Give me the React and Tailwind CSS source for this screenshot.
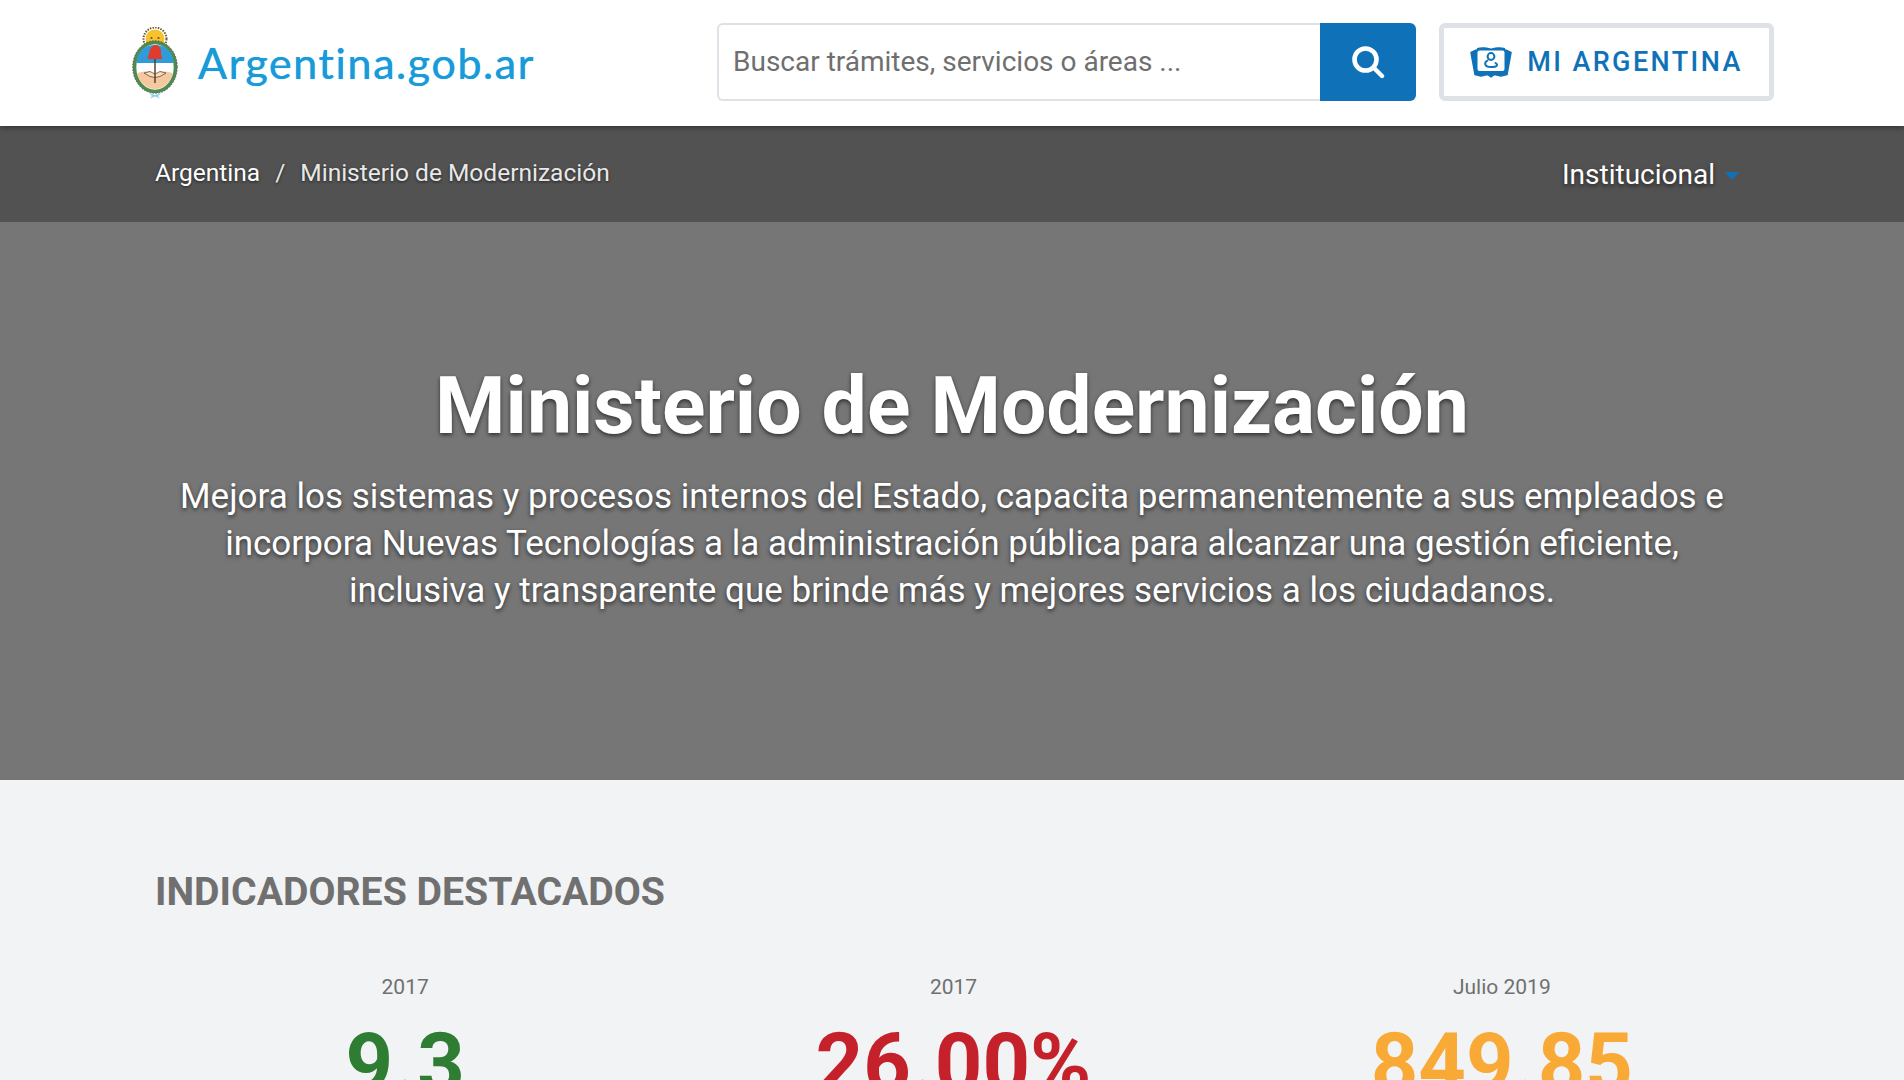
import React from "react";

const Crest = () => (
  <svg width="50" height="72" viewBox="0 0 50 72" className="mt-[2px] shrink-0">
    {/* sun */}
    <circle cx="25" cy="12" r="11.5" fill="none" stroke="#6b5a2a" strokeWidth="2" strokeDasharray="1.5 1.2" />
    <circle cx="25" cy="12" r="9.5" fill="#f6c22d" />
    <circle cx="21.5" cy="11" r="1.1" fill="#6b5a2a" />
    <circle cx="28.5" cy="11" r="1.1" fill="#6b5a2a" />
    {/* laurel */}
    <ellipse cx="25" cy="40" rx="20.5" ry="24.5" fill="#ffffff" stroke="#4f8a4f" strokeWidth="3.6" />
    <ellipse cx="25" cy="40" rx="22.3" ry="26.3" fill="none" stroke="#555" strokeWidth="0.9" strokeDasharray="1.5 1.5" />
    {/* shield */}
    <path d="M6.5 36C6.5 25 14.5 18 25 18s18.5 7 18.5 18z" fill="#2f9bd8" />
    <path d="M7.500 46c.8 8 8 16 17.500 16s16.700-8 17.500-16c-5-1.500-9-1.800-12-1.500l-5.500 3-5.500-3c-3-.3-7 0-12 1.500z" fill="#f5c9a0" />
    <path d="M14 46l6-1.500 5 2.500 5-2.500 6 1.500-6 3.500-5 1-5-1z" fill="#f8dcc0" stroke="#6b4a30" strokeWidth="0.8" />
    {/* pike and cap */}
    <rect x="24.300" y="31" width="1.400" height="25" fill="#4a3a2a" />
    <path d="M17.500 32c.3-2.500 1.500-4 1.800-6.500.4-3.500 3-7.500 6.200-7.500 3 0 6 3.500 5.500 7.500-.2 2.500 .8 4.500 1.500 6.500z" fill="#e23b2e" />
    {/* ribbon */}
    <path d="M19 66l6 2 6-2-3 3 2 2.500-5-2-5 2 2-2.500z" fill="#8fd0f0" />
  </svg>
);

const SearchIcon = () => (
  <svg width="34" height="34" viewBox="0 0 34 34" fill="none" stroke="#ffffff" className="shrink-0">
    <circle cx="14.500" cy="14.500" r="11" strokeWidth="4.600" />
    <path d="M23 23l8 8" strokeWidth="4.400" strokeLinecap="round" />
  </svg>
);

const MiArgIcon = () => (
  <svg width="42" height="31" viewBox="0 0 42 31" className="shrink-0">
    <path d="M1 5.500 6.500 3 9 5 33 5 35.500 3 41 5.500 37 27.500 31 29 24.500 27.500 21 30 17.500 27.500 11 29 5 27.500z" fill="#0f72b8" stroke="#0f72b8" strokeWidth="1.500" strokeLinejoin="round" />
    <path d="M7 1c5-1.200 9-.6 14 .5C26 .4 30-.2 35 1v3H7z" fill="#0f72b8" />
    <rect x="7.500" y="3.500" width="27" height="20.500" rx="2" fill="#ffffff" />
    <circle cx="21" cy="9.500" r="3.400" fill="none" stroke="#0f72b8" strokeWidth="2" />
    <path d="M17.500 13.500c-3.500 2-3.500 6.500 3.500 6.500s7-2.500 4.500-4" fill="none" stroke="#0f72b8" strokeWidth="2" strokeLinecap="round" />
  </svg>
);

const Indicator = ({ label, value, color }) => (
  <div className="flex flex-col items-center">
    <div className="text-[21px] leading-[30px] text-[#707070]">{label}</div>
    <div className={`mt-[12px] text-[83px] leading-[100px] font-bold ${color}`}>{value}</div>
  </div>
);

export default function App() {
  return (
    <div className="h-screen overflow-hidden bg-[#f1f3f5] font-['Roboto',sans-serif]">
      <header className="relative z-10 h-[126px] bg-white shadow-[0_2px_5px_rgba(0,0,0,0.35)]">
        <div className="flex h-full items-center pb-[2px] pl-[130px] pr-[130px]">
          <div className="flex items-center gap-[18px]">
            <Crest />
            <span className="font-['Lato',sans-serif] text-[43px] leading-none font-normal text-[#1a9ad9] tracking-[1.6px] [text-shadow:0_0_0.8px_#1a9ad9]">
              Argentina.gob.ar
            </span>
          </div>
          <div className="ml-auto flex h-[78px] items-stretch">
            <div className="flex w-[603px] items-center rounded-l-[6px] border-[2px] border-r-0 border-[#dee2e6] bg-white pl-[14px] text-[28px] text-[#6f6f6f]">
              Buscar trámites, servicios o áreas ...
            </div>
            <div className="flex w-[96px] items-center justify-center rounded-r-[6px] bg-[#0f72b8]">
              <SearchIcon />
            </div>
            <div className="ml-[23px] flex w-[335px] items-center justify-center gap-[15px] rounded-[6px] border-[5px] border-[#dee2e6] bg-white text-[27px] font-medium tracking-[2.4px] text-[#0f72b8]">
              <MiArgIcon />
              <span>MI ARGENTINA</span>
            </div>
          </div>
        </div>
      </header>

      <nav className="flex h-[96px] items-center justify-between bg-[#525252] pb-[2px] pl-[155px] pr-[165px]">
        <div className="flex items-center text-[24.5px] text-[#e8e8e8] [text-shadow:0_1px_3px_rgba(0,0,0,0.6)]">
          <span className="text-white">Argentina</span>
          <span className="mx-[15px]">/</span>
          <span>Ministerio de Modernización</span>
        </div>
        <div className="flex items-center gap-[10px] pt-[3px] text-[28px] text-white [text-shadow:0_2px_4px_rgba(0,0,0,0.6)]">
          <span>Institucional</span>
          <span className="mt-[3px] h-0 w-0 border-x-[7px] border-t-[8px] border-x-transparent border-t-[#0f72b8]" />
        </div>
      </nav>

      <section className="flex h-[558px] flex-col items-center bg-[#767676] pt-[138px] text-center text-white [text-shadow:0_2px_4px_rgba(0,0,0,0.6)]">
        <h1 className="text-[80.5px] leading-[92px] font-bold">Ministerio de Modernización</h1>
        <p className="mt-[21px] w-[1600px] text-[35px] leading-[47px]">
          Mejora los sistemas y procesos internos del Estado, capacita permanentemente a sus empleados e
          <br />
          incorpora Nuevas Tecnologías a la administración pública para alcanzar una gestión eficiente,
          <br />
          inclusiva y transparente que brinde más y mejores servicios a los ciudadanos.
        </p>
      </section>

      <main className="pl-[131px] pr-[128px] pt-[88px]">
        <h2 className="pl-[24px] text-[39.2px] leading-[48px] font-bold text-[#707070]">INDICADORES DESTACADOS</h2>
        <div className="mt-[56px] grid grid-cols-3">
          <Indicator label="2017" value="9.3" color="text-[#2e7d32]" />
          <Indicator label="2017" value="26.00%" color="text-[#c4212a]" />
          <Indicator label="Julio 2019" value="849.85" color="text-[#f9a935]" />
        </div>
      </main>
    </div>
  );
}
